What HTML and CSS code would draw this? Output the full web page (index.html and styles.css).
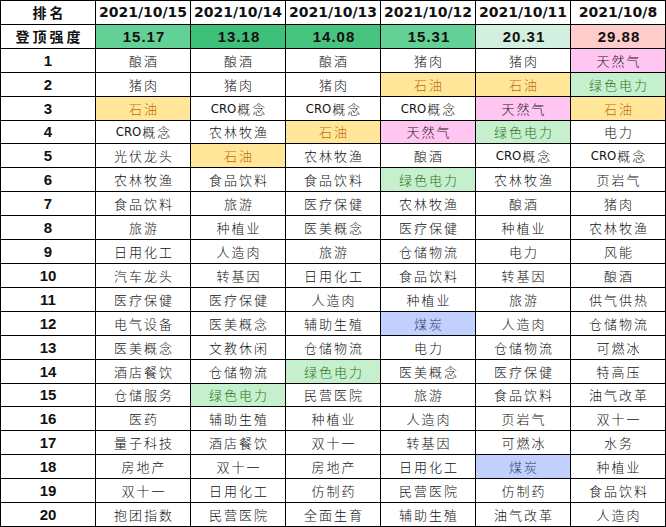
FILE: index.html
```html
<!DOCTYPE html>
<html lang="zh-CN">
<head>
<meta charset="utf-8">
<title>登顶强度排名</title>
<link rel="stylesheet" href="styles.css">
</head>
<body>
<div class="sheet">
  <div class="c hd cn">排名</div>
  <div class="c hd">2021/10/15</div>
  <div class="c hd">2021/10/14</div>
  <div class="c hd">2021/10/13</div>
  <div class="c hd">2021/10/12</div>
  <div class="c hd">2021/10/11</div>
  <div class="c hd">2021/10/8</div>

  <div class="c hd cn">登顶强度</div>
  <div class="c num g2">15.17</div>
  <div class="c num g1">13.18</div>
  <div class="c num g1b">14.08</div>
  <div class="c num g2">15.31</div>
  <div class="c num g3">20.31</div>
  <div class="c num r1">29.88</div>

  <div class="c rk">1</div><div class="c">酿酒</div><div class="c">酿酒</div><div class="c">酿酒</div><div class="c">猪肉</div><div class="c">猪肉</div><div class="c pk">天然气</div>
  <div class="c rk">2</div><div class="c">猪肉</div><div class="c">猪肉</div><div class="c">猪肉</div><div class="c yl">石油</div><div class="c yl">石油</div><div class="c gr">绿色电力</div>
  <div class="c rk">3</div><div class="c yl">石油</div><div class="c"><span class="lat">CRO</span>概念</div><div class="c"><span class="lat">CRO</span>概念</div><div class="c"><span class="lat">CRO</span>概念</div><div class="c pk">天然气</div><div class="c yl">石油</div>
  <div class="c rk">4</div><div class="c"><span class="lat">CRO</span>概念</div><div class="c">农林牧渔</div><div class="c yl">石油</div><div class="c pk">天然气</div><div class="c gr">绿色电力</div><div class="c">电力</div>
  <div class="c rk">5</div><div class="c">光伏龙头</div><div class="c yl">石油</div><div class="c">农林牧渔</div><div class="c">酿酒</div><div class="c"><span class="lat">CRO</span>概念</div><div class="c"><span class="lat">CRO</span>概念</div>
  <div class="c rk">6</div><div class="c">农林牧渔</div><div class="c">食品饮料</div><div class="c">食品饮料</div><div class="c gr">绿色电力</div><div class="c">农林牧渔</div><div class="c">页岩气</div>
  <div class="c rk">7</div><div class="c">食品饮料</div><div class="c">旅游</div><div class="c">医疗保健</div><div class="c">农林牧渔</div><div class="c">酿酒</div><div class="c">猪肉</div>
  <div class="c rk">8</div><div class="c">旅游</div><div class="c">种植业</div><div class="c">医美概念</div><div class="c">医疗保健</div><div class="c">种植业</div><div class="c">农林牧渔</div>
  <div class="c rk">9</div><div class="c">日用化工</div><div class="c">人造肉</div><div class="c">旅游</div><div class="c">仓储物流</div><div class="c">电力</div><div class="c">风能</div>
  <div class="c rk">10</div><div class="c">汽车龙头</div><div class="c">转基因</div><div class="c">日用化工</div><div class="c">食品饮料</div><div class="c">转基因</div><div class="c">酿酒</div>
  <div class="c rk">11</div><div class="c">医疗保健</div><div class="c">医疗保健</div><div class="c">人造肉</div><div class="c">种植业</div><div class="c">旅游</div><div class="c">供气供热</div>
  <div class="c rk">12</div><div class="c">电气设备</div><div class="c">医美概念</div><div class="c">辅助生殖</div><div class="c bl">煤炭</div><div class="c">人造肉</div><div class="c">仓储物流</div>
  <div class="c rk">13</div><div class="c">医美概念</div><div class="c">文教休闲</div><div class="c">仓储物流</div><div class="c">电力</div><div class="c">仓储物流</div><div class="c">可燃冰</div>
  <div class="c rk">14</div><div class="c">酒店餐饮</div><div class="c">仓储物流</div><div class="c gr">绿色电力</div><div class="c">医美概念</div><div class="c">医疗保健</div><div class="c">特高压</div>
  <div class="c rk">15</div><div class="c">仓储服务</div><div class="c gr">绿色电力</div><div class="c">民营医院</div><div class="c">旅游</div><div class="c">食品饮料</div><div class="c">油气改革</div>
  <div class="c rk">16</div><div class="c">医药</div><div class="c">辅助生殖</div><div class="c">种植业</div><div class="c">人造肉</div><div class="c">页岩气</div><div class="c">双十一</div>
  <div class="c rk">17</div><div class="c">量子科技</div><div class="c">酒店餐饮</div><div class="c">双十一</div><div class="c">转基因</div><div class="c">可燃冰</div><div class="c">水务</div>
  <div class="c rk">18</div><div class="c">房地产</div><div class="c">双十一</div><div class="c">房地产</div><div class="c">日用化工</div><div class="c bl">煤炭</div><div class="c">种植业</div>
  <div class="c rk">19</div><div class="c">双十一</div><div class="c">日用化工</div><div class="c">仿制药</div><div class="c">民营医院</div><div class="c">仿制药</div><div class="c">食品饮料</div>
  <div class="c rk">20</div><div class="c">抱团指数</div><div class="c">民营医院</div><div class="c">全面生育</div><div class="c">辅助生殖</div><div class="c">油气改革</div><div class="c">人造肉</div>
</div>
</body>
</html>
```
FILE: styles.css
```css
html, body {
  margin: 0;
  padding: 0;
  background: #ffffff;
}

.sheet {
  display: grid;
  grid-template-columns: repeat(7, 94px);
  grid-template-rows: repeat(22, 1fr);
  gap: 1px;
  padding: 1px;
  width: 664px;
  height: 525px;
  background: #000000;
}

.c {
  background: #ffffff;
  display: flex;
  align-items: center;
  justify-content: center;
  font-family: "Noto Sans CJK SC", "Noto Sans", sans-serif;
  font-weight: 300;
  font-size: 13px;
  letter-spacing: 2px;
  color: #111111;
  white-space: nowrap;
  overflow: hidden;
  padding-left: 2px;
}

.lat {
  font-family: "DejaVu Sans", "Liberation Sans", sans-serif;
  font-stretch: condensed;
  font-weight: normal;
  font-size: 13px;
  letter-spacing: 0;
  margin-right: 1px;
  color: #111111;
}

.hd {
  font-family: "DejaVu Sans", "Liberation Sans", sans-serif;
  font-weight: bold;
  font-size: 14px;
  letter-spacing: 0;
  color: #111111;
  padding-left: 0;
}

.hd.cn {
  font-family: "Noto Sans CJK SC", sans-serif;
  font-size: 14px;
  letter-spacing: 3px;
  padding-left: 3px;
}

.num {
  font-family: "Liberation Sans", "Arial", sans-serif;
  font-weight: bold;
  font-size: 15px;
  letter-spacing: 1px;
  color: #111111;
}

.rk {
  font-family: "Liberation Sans", "Arial", sans-serif;
  font-weight: bold;
  font-size: 15px;
  letter-spacing: 0;
  color: #111111;
  padding-left: 0;
}

.g1 { background: #3fc07a; }
.g1b { background: #47c380; }
.g2 { background: #63d196; }
.g3 { background: #d3efdf; }
.r1 { background: #ffcccc; }

.yl { background: #ffe699; color: #bd6f08; }
.pk { background: #ffc6f2; color: #1e101e; }
.gr { background: #c6efce; color: #2a7518; }
.bl { background: #c2d0ff; color: #34425f; }
```
